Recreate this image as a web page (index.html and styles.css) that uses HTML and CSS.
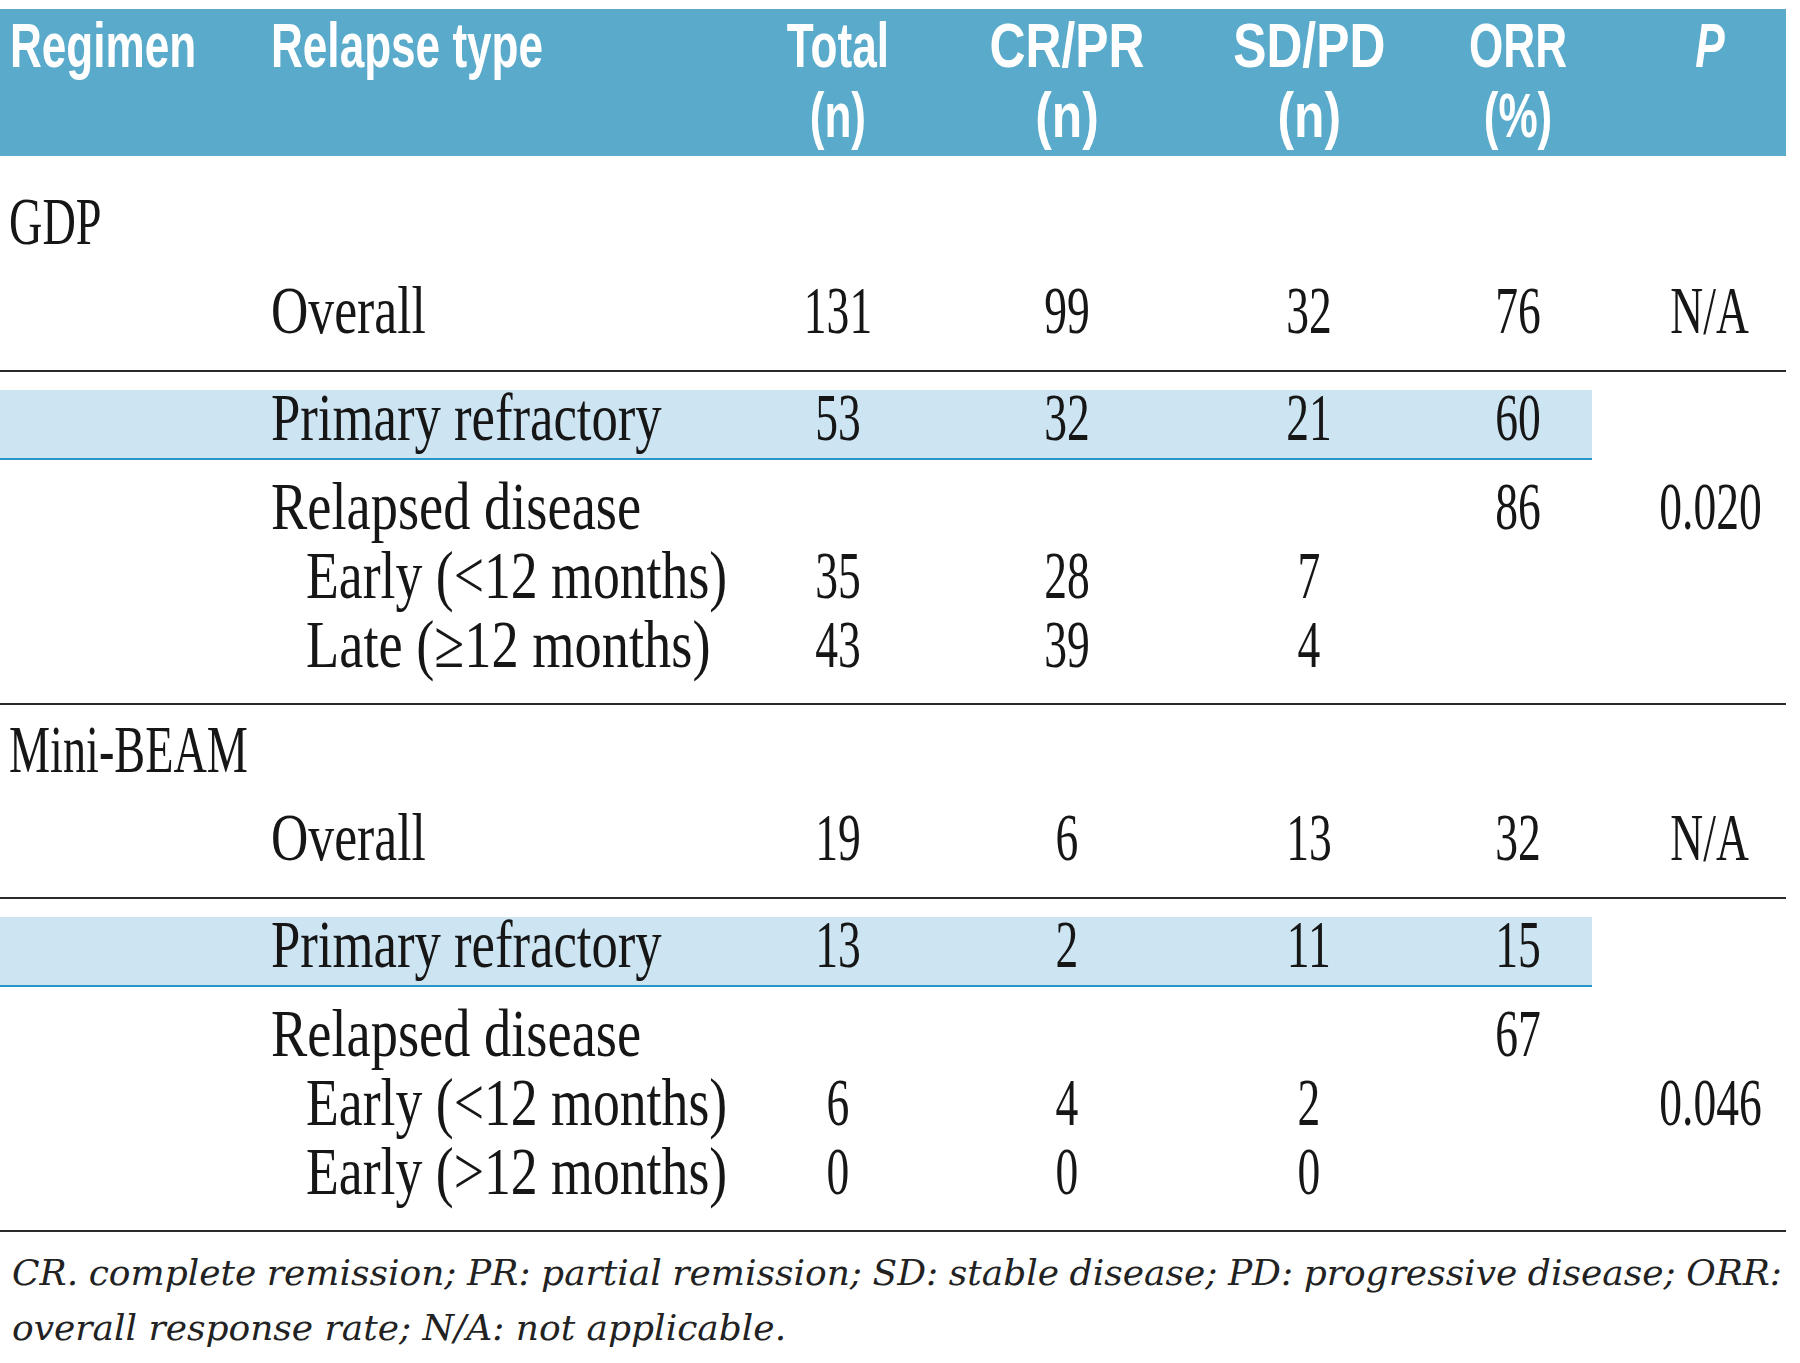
FILE: index.html
```html
<!DOCTYPE html>
<html lang="en">
<head>
<meta charset="utf-8">
<title>Response by relapse type</title>
<link rel="stylesheet" href="styles.css">
</head>
<body>
<div class="table">
  <div class="row head">
    <div class="cell l"><span class="sx">Regimen</span></div>
    <div class="cell l"><span class="sx">Relapse type</span></div>
    <div class="cell"><span class="sx">Total<br>(n)</span></div>
    <div class="cell"><span class="sx wide">CR/PR<br>(n)</span></div>
    <div class="cell"><span class="sx wide">SD/PD<br>(n)</span></div>
    <div class="cell"><span class="sx">ORR<br>(%)</span></div>
    <div class="cell p"><span class="sx"><i>P</i></span></div>
  </div>

  <section class="group top first">
    <div class="row reg"><div class="cell l"><span class="sx cap">GDP</span></div></div>
    <div class="row overall">
      <div class="cell"></div>
      <div class="cell l"><span class="sx txt ov">Overall</span></div>
      <div class="cell"><span class="sx num">131</span></div>
      <div class="cell"><span class="sx num">99</span></div>
      <div class="cell"><span class="sx num">32</span></div>
      <div class="cell"><span class="sx num">76</span></div>
      <div class="cell p"><span class="sx num">N/A</span></div>
    </div>
  </section>

  <section class="group sub">
    <div class="row hl">
      <div class="cell"></div>
      <div class="cell l"><span class="sx txt pr">Primary refractory</span></div>
      <div class="cell"><span class="sx num">53</span></div>
      <div class="cell"><span class="sx num">32</span></div>
      <div class="cell"><span class="sx num">21</span></div>
      <div class="cell"><span class="sx num">60</span></div>
      <div class="cell p"></div>
    </div>
    <div class="row relapsed">
      <div class="cell"></div>
      <div class="cell l"><span class="sx txt rd">Relapsed disease</span></div>
      <div class="cell"></div>
      <div class="cell"></div>
      <div class="cell"></div>
      <div class="cell"><span class="sx num">86</span></div>
      <div class="cell p"><span class="sx num">0.020</span></div>
    </div>
    <div class="row">
      <div class="cell"></div>
      <div class="cell l ind"><span class="sx txt">Early (&lt;12 months)</span></div>
      <div class="cell"><span class="sx num">35</span></div>
      <div class="cell"><span class="sx num">28</span></div>
      <div class="cell"><span class="sx num">7</span></div>
      <div class="cell"></div>
      <div class="cell p"></div>
    </div>
    <div class="row">
      <div class="cell"></div>
      <div class="cell l ind"><span class="sx txt rd">Late (≥12 months)</span></div>
      <div class="cell"><span class="sx num">43</span></div>
      <div class="cell"><span class="sx num">39</span></div>
      <div class="cell"><span class="sx num">4</span></div>
      <div class="cell"></div>
      <div class="cell p"></div>
    </div>
  </section>

  <section class="group top">
    <div class="row reg"><div class="cell l"><span class="sx cap">Mini-BEAM</span></div></div>
    <div class="row overall">
      <div class="cell"></div>
      <div class="cell l"><span class="sx txt ov">Overall</span></div>
      <div class="cell"><span class="sx num">19</span></div>
      <div class="cell"><span class="sx num">6</span></div>
      <div class="cell"><span class="sx num">13</span></div>
      <div class="cell"><span class="sx num">32</span></div>
      <div class="cell p"><span class="sx num">N/A</span></div>
    </div>
  </section>

  <section class="group sub">
    <div class="row hl">
      <div class="cell"></div>
      <div class="cell l"><span class="sx txt pr">Primary refractory</span></div>
      <div class="cell"><span class="sx num">13</span></div>
      <div class="cell"><span class="sx num">2</span></div>
      <div class="cell"><span class="sx num">11</span></div>
      <div class="cell"><span class="sx num">15</span></div>
      <div class="cell p"></div>
    </div>
    <div class="row relapsed">
      <div class="cell"></div>
      <div class="cell l"><span class="sx txt rd">Relapsed disease</span></div>
      <div class="cell"></div>
      <div class="cell"></div>
      <div class="cell"></div>
      <div class="cell"><span class="sx num">67</span></div>
      <div class="cell p"></div>
    </div>
    <div class="row">
      <div class="cell"></div>
      <div class="cell l ind"><span class="sx txt">Early (&lt;12 months)</span></div>
      <div class="cell"><span class="sx num">6</span></div>
      <div class="cell"><span class="sx num">4</span></div>
      <div class="cell"><span class="sx num">2</span></div>
      <div class="cell"></div>
      <div class="cell p"><span class="sx num">0.046</span></div>
    </div>
    <div class="row">
      <div class="cell"></div>
      <div class="cell l ind"><span class="sx txt">Early (&gt;12 months)</span></div>
      <div class="cell"><span class="sx num">0</span></div>
      <div class="cell"><span class="sx num">0</span></div>
      <div class="cell"><span class="sx num">0</span></div>
      <div class="cell"></div>
      <div class="cell p"></div>
    </div>
  </section>

  <div class="note">
    <div class="note-line just">CR. complete remission; PR: partial remission; SD: stable disease; PD: progressive disease; ORR:</div>
    <div class="note-line">overall response rate; N/A: not applicable.</div>
  </div>
</div>
</body>
</html>
```

FILE: styles.css
```css
* { box-sizing: border-box; }

body {
  margin: 0;
  padding-top: 9px;
  background: #ffffff;
  color: #161616;
  font-family: "Liberation Serif", "Times New Roman", serif;
}

.table {
  width: 1786px;
}

.row {
  display: grid;
  grid-template-columns: 262px 476px 200px 258px 226px 192px 172px;
  font-size: 68px;
  line-height: 69px;
}

.cell {
  text-align: center;
  white-space: nowrap;
}

.cell.l {
  text-align: left;
  padding-left: 9px;
}

.cell.l.ind {
  padding-left: 44px;
}

.cell.p {
  padding-left: 20px;
}

.sx {
  display: inline-block;
  transform: scaleX(0.7);
  transform-origin: center top;
}

.l .sx {
  transform-origin: left top;
}

.sx.wide { transform: scaleX(0.79); }
.txt { transform: scaleX(0.79); }
.txt.ov { transform: scaleX(0.76); }
.txt.pr { transform: scaleX(0.775); }
.txt.rd { transform: scaleX(0.8); }
.num { transform: scaleX(0.67); }
.cap { transform: scaleX(0.68); }

/* header band */
.head {
  background: #5aaacb;
  color: #ffffff;
  font-family: "Liberation Sans", Arial, sans-serif;
  font-weight: 700;
  font-size: 63px;
  line-height: 70px;
  padding: 1px 0 6px;
}

.head .cell.l {
  padding-left: 10px;
}

.head .cell.l + .cell.l {
  padding-left: 9px;
}

/* regimen group: name + overall */
.group.top {
  padding-bottom: 25px;
  border-bottom: 2px solid #2a2a2a;
}

.group.top .reg {
  margin-top: 10px;
}

.group.top.first .reg {
  margin-top: 31px;
}

.group.top .overall {
  margin-top: 19px;
}

.group.top.first .overall {
  margin-top: 20px;
}

/* relapse sub-group */
.group.sub {
  padding-bottom: 24px;
  border-bottom: 2px solid #2a2a2a;
}

.hl {
  width: 1592px;
  margin-top: 18px;
  background: #cde4f2;
  border-bottom: 2px solid #2596c8;
  line-height: 55px;
  padding-bottom: 13px;
}

.relapsed {
  margin-top: 12px;
}

/* footnote */
.note {
  margin-top: 13px;
  padding: 0 4px 0 12px;
  font-family: "DejaVu Serif", "Liberation Serif", serif;
  font-style: italic;
  font-size: 36px;
  line-height: 55px;
  color: #222222;
}

.note-line {
  white-space: nowrap;
}

.note-line.just {
  word-spacing: -6px;
  text-align: justify;
  text-align-last: justify;
}
```
